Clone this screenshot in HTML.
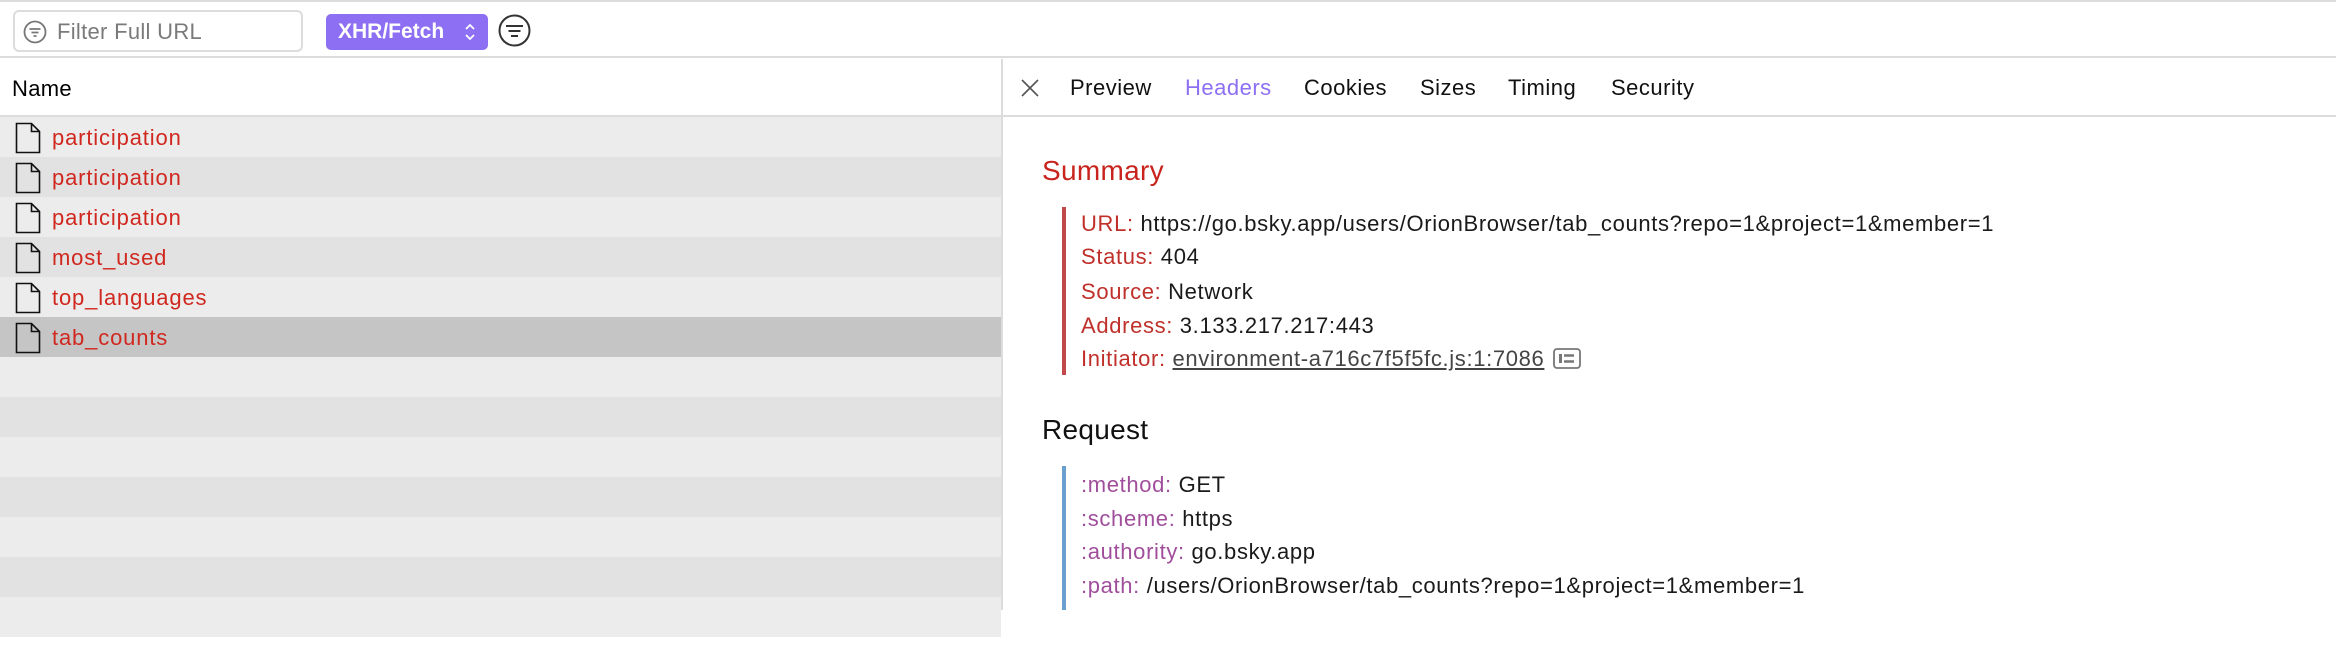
<!DOCTYPE html>
<html><head><meta charset="utf-8"><style>
*{margin:0;padding:0;box-sizing:border-box}
body{width:2336px;height:610px;overflow:hidden;background:#fff;font-family:"Liberation Sans",sans-serif;position:relative}
.abs{position:absolute}
.topline{left:0;top:0;width:2336px;height:2px;background:#dcdcdc}
.bar{left:0;top:2px;width:2336px;height:56px;background:#fff;border-bottom:2px solid #dcdcdc}
.input{left:13px;top:10px;width:290px;height:42px;border:2px solid #dcdcdc;border-radius:6px;background:#fff}
.input span{position:absolute;left:42px;top:7px;font-size:22px;color:#7a7a7a;letter-spacing:0.3px}
.btn{left:326px;top:14px;width:162px;height:36px;background:#8c6ff2;border-radius:5px;color:#fff;font-size:21px;font-weight:bold}
.btn span{position:absolute;left:12px;top:6px}
.left{left:0;top:59px;width:1001px;height:551px}
.hdr{left:0;top:59px;width:1001px;height:58px;background:#fff;border-bottom:2px solid #dcdcdc}
.hdr span{position:absolute;left:12px;top:17px;font-size:22px;color:#000;letter-spacing:0.3px}
.row{position:absolute;left:0;width:1001px;height:40px}
.row span{position:absolute;left:52px;top:8px;font-size:22px;letter-spacing:0.85px;color:#d0281f}
.row svg{position:absolute;left:15px;top:5px}
.vdiv{left:1001px;top:59px;width:2px;height:551px;background:#dcdcdc}
.tabs{left:1003px;top:59px;width:1333px;height:58px;border-bottom:2px solid #dcdcdc}
.tab{position:absolute;top:16px;font-size:22px;letter-spacing:0.5px;color:#111}
.line{position:absolute;font-size:22px;letter-spacing:0.65px;color:#1a1a1a;white-space:nowrap}
.r{color:#c0302b}
.p{color:#a04e9c}
</style></head><body>
<div class="abs topline"></div>
<div class="abs bar"></div>
<div class="abs input">
<svg class="abs" style="left:8px;top:8px" width="24" height="24" viewBox="0 0 24 24"><circle cx="12" cy="12" r="10.5" fill="none" stroke="#777" stroke-width="1.8"/><path d="M6.5 9h11M8.5 12.5h7M10.5 16h3" stroke="#777" stroke-width="1.8"/></svg>
<span>Filter Full URL</span></div>
<div class="abs btn"><span>XHR/Fetch</span>
<svg class="abs" style="left:137px;top:8px" width="14" height="20" viewBox="0 0 14 20"><path d="M3 7l4-4 4 4M3 13l4 4 4-4" fill="none" stroke="#fff" stroke-width="1.8"/></svg></div>
<svg class="abs" style="left:498px;top:14px" width="33" height="33" viewBox="0 0 33 33"><circle cx="16.5" cy="16.5" r="15" fill="none" stroke="#333" stroke-width="2"/><path d="M8 12h17M10.5 17h12M13 22h7" stroke="#333" stroke-width="2"/></svg>

<div class="abs hdr"><span>Name</span></div>
<div class="abs left" style="top:117px">
<div class="row" style="top:0;background:#ececec"><svg width="26" height="32" viewBox="0 0 26 32"><path d="M1.5 1.5h15l8 8v21h-23z M16.5 1.5v8h8" fill="none" stroke="#111" stroke-width="1.6"/></svg><span>participation</span></div>
<div class="row" style="top:40px;background:#e2e2e2"><svg width="26" height="32" viewBox="0 0 26 32"><path d="M1.5 1.5h15l8 8v21h-23z M16.5 1.5v8h8" fill="none" stroke="#111" stroke-width="1.6"/></svg><span>participation</span></div>
<div class="row" style="top:80px;background:#ececec"><svg width="26" height="32" viewBox="0 0 26 32"><path d="M1.5 1.5h15l8 8v21h-23z M16.5 1.5v8h8" fill="none" stroke="#111" stroke-width="1.6"/></svg><span>participation</span></div>
<div class="row" style="top:120px;background:#e2e2e2"><svg width="26" height="32" viewBox="0 0 26 32"><path d="M1.5 1.5h15l8 8v21h-23z M16.5 1.5v8h8" fill="none" stroke="#111" stroke-width="1.6"/></svg><span>most_used</span></div>
<div class="row" style="top:160px;background:#ececec"><svg width="26" height="32" viewBox="0 0 26 32"><path d="M1.5 1.5h15l8 8v21h-23z M16.5 1.5v8h8" fill="none" stroke="#111" stroke-width="1.6"/></svg><span>top_languages</span></div>
<div class="row" style="top:200px;background:#c5c5c5"><svg width="26" height="32" viewBox="0 0 26 32"><path d="M1.5 1.5h15l8 8v21h-23z M16.5 1.5v8h8" fill="none" stroke="#111" stroke-width="1.6"/></svg><span>tab_counts</span></div>
<div class="row" style="top:240px;background:#ececec"></div>
<div class="row" style="top:280px;background:#e2e2e2"></div>
<div class="row" style="top:320px;background:#ececec"></div>
<div class="row" style="top:360px;background:#e2e2e2"></div>
<div class="row" style="top:400px;background:#ececec"></div>
<div class="row" style="top:440px;background:#e2e2e2"></div>
<div class="row" style="top:480px;background:#ececec"></div>
</div>
<div class="abs vdiv"></div>
<div class="abs tabs">
<svg class="abs" style="left:17px;top:19px" width="20" height="20" viewBox="0 0 20 20"><path d="M2 2l16 16M18 2L2 18" stroke="#555" stroke-width="1.6"/></svg>
<span class="tab" style="left:67px">Preview</span>
<span class="tab" style="left:182px;color:#8c6ff2">Headers</span>
<span class="tab" style="left:301px">Cookies</span>
<span class="tab" style="left:417px">Sizes</span>
<span class="tab" style="left:505px">Timing</span>
<span class="tab" style="left:608px">Security</span>
</div>
<div class="abs" style="left:1042px;top:155px;font-size:28px;letter-spacing:0.3px;color:#c8231d">Summary</div>
<div class="abs" style="left:1062px;top:207px;width:4px;height:168px;background:#c0474a"></div>
<div class="line" style="left:1081px;top:211px"><span class="r">URL:</span> https://go.bsky.app/users/OrionBrowser/tab_counts?repo=1&amp;project=1&amp;member=1</div>
<div class="line" style="left:1081px;top:244px"><span class="r">Status:</span> 404</div>
<div class="line" style="left:1081px;top:279px"><span class="r">Source:</span> Network</div>
<div class="line" style="left:1081px;top:313px"><span class="r">Address:</span> 3.133.217.217:443</div>
<div class="line" style="left:1081px;top:346px"><span class="r">Initiator:</span> <span style="color:#444;text-decoration:underline">environment-a716c7f5f5fc.js:1:7086</span> <svg style="vertical-align:-3px;margin-left:2px" width="28" height="21" viewBox="0 0 28 21"><rect x="1" y="1" width="26" height="19" rx="3" fill="none" stroke="#777" stroke-width="1.8"/><rect x="6" y="6" width="3" height="9" fill="#777"/><path d="M11 7.5h10M11 13.5h10" stroke="#777" stroke-width="2.5"/></svg></div>
<div class="abs" style="left:1042px;top:414px;font-size:28px;letter-spacing:0.3px;color:#111">Request</div>
<div class="abs" style="left:1062px;top:466px;width:4px;height:144px;background:#6a9fd0"></div>
<div class="line" style="left:1081px;top:472px"><span class="p">:method:</span> GET</div>
<div class="line" style="left:1081px;top:506px"><span class="p">:scheme:</span> https</div>
<div class="line" style="left:1081px;top:539px"><span class="p">:authority:</span> go.bsky.app</div>
<div class="line" style="left:1081px;top:573px"><span class="p">:path:</span> /users/OrionBrowser/tab_counts?repo=1&amp;project=1&amp;member=1</div>
</body></html>
